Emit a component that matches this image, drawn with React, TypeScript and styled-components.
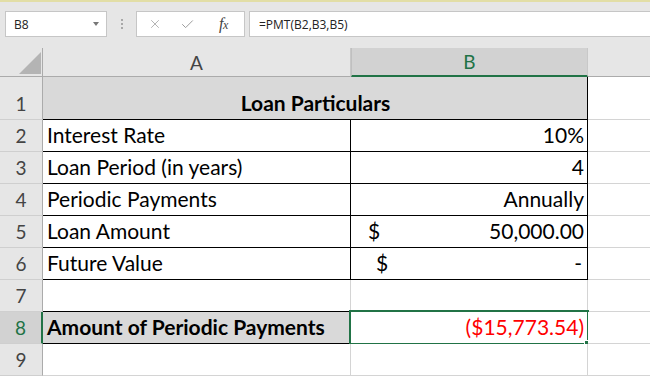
import React from "react";
import styled, { createGlobalStyle, css } from "styled-components";
import { X, Check } from "lucide-react";

const GREEN = "#217346";
const GRID = "#d4d4d4";
const INK = "#000";

const GlobalStyle = createGlobalStyle`
  body {
    margin: 0;
    background: #e6e6e6;
    font-family: Lato, "Open Sans", sans-serif;
  }
`;

const Window = styled.div`
  width: 650px;
  height: 376px;
  overflow: hidden;
  background: #e6e6e6;
  border-top: 2px solid #e2dea6;
  box-sizing: border-box;
`;

/* formula bar */
const FormulaBar = styled.div`
  display: flex;
  align-items: center;
  height: 26px;
  margin-top: 9px;
  padding-left: 5px;
  font-family: "Open Sans", sans-serif;
  font-size: 12px;
  color: #222;
`;
const NameBox = styled.div`
  display: flex;
  align-items: center;
  justify-content: space-between;
  box-sizing: border-box;
  width: 102px;
  height: 26px;
  padding: 0 7px 0 8px;
  background: #fff;
  border: 1px solid #c6c6c6;
`;
const DropArrow = styled.span`
  width: 0;
  height: 0;
  border-left: 3.5px solid transparent;
  border-right: 3.5px solid transparent;
  border-top: 4px solid #777;
`;
const Grip = styled.div`
  display: flex;
  flex-direction: column;
  gap: 2px;
  margin: 0 13px 0 14px;
  & > span {
    width: 2px;
    height: 2px;
    background: #a8a8a8;
  }
`;
const FuncBox = styled.div`
  display: flex;
  align-items: center;
  box-sizing: border-box;
  width: 109px;
  height: 26px;
  padding-left: 11px;
  gap: 18px;
  background: #fff;
  border: 1px solid #c6c6c6;
  color: #9c9c9c;
`;
const Fx = styled.span`
  font-family: "Liberation Serif", serif;
  font-style: italic;
  font-size: 16px;
  color: #444;
  margin-left: 6px;
  letter-spacing: -0.5px;
  & > small {
    font-size: 12px;
  }
`;
const FormulaInput = styled.div`
  flex: 1;
  display: flex;
  align-items: center;
  box-sizing: border-box;
  height: 26px;
  margin-left: 4px;
  padding-left: 9px;
  background: #fff;
  border: 1px solid #c6c6c6;
  border-right: none;
`;

/* sheet */
const Sheet = styled.div`
  display: grid;
  grid-template-columns: 43px 308px 237px 120px;
  grid-template-rows: 29px 43px repeat(9, 32px);
  margin-top: 11px;
`;

const HeadCell = styled.div<{ $active?: boolean }>`
  display: flex;
  align-items: center;
  justify-content: center;
  box-sizing: border-box;
  border-right: 1px solid #c8c8c8;
  border-bottom: 1px solid #ababab;
  font-size: 19px;
  color: #444;
  ${(p) =>
    p.$active &&
    css`
      background: #d2d2d2;
      color: ${GREEN};
      border-bottom: 2px solid ${GREEN};
      border-left: 1px solid #c0c0c0;
    `}
`;
const Corner = styled(HeadCell)`
  align-items: flex-end;
  justify-content: flex-end;
  padding: 0 1px 2px 0;
  border-right: 1px solid #ababab;
`;
const CornerMark = styled.span`
  width: 0;
  height: 0;
  border-left: 22px solid transparent;
  border-bottom: 22px solid #b4b4b4;
`;

const RowHead = styled.div<{ $active?: boolean }>`
  display: flex;
  align-items: flex-end;
  justify-content: center;
  box-sizing: border-box;
  padding-bottom: 4px;
  border-right: 1px solid #ababab;
  border-bottom: 1px solid #cfcfcf;
  font-size: 19px;
  color: #444;
  ${(p) =>
    p.$active &&
    css`
      background: #d2d2d2;
      color: ${GREEN};
      border-right: 2px solid ${GREEN};
    `}
`;

const Cell = styled.div<{
  $right?: string;
  $bottom?: string;
  $align?: "left" | "right" | "center" | "split";
  $fill?: boolean;
  $bold?: boolean;
  $span?: number;
  $indent?: number;
  $tail?: number;
  $color?: string;
}>`
  position: relative;
  display: flex;
  align-items: flex-end;
  box-sizing: border-box;
  padding: 0 ${(p) => p.$tail ?? 3}px 4px ${(p) => p.$indent ?? 4}px;
  background: ${(p) => (p.$fill ? "#d9d9d9" : "#fff")};
  border-right: 1px solid ${(p) => p.$right ?? GRID};
  border-bottom: 1px solid ${(p) => p.$bottom ?? GRID};
  font-size: 21px;
  font-weight: ${(p) => (p.$bold ? 700 : 400)};
  color: ${(p) => p.$color ?? INK};
  white-space: nowrap;
  grid-column: span ${(p) => p.$span ?? 1};
  justify-content: ${(p) =>
    p.$align === "right"
      ? "flex-end"
      : p.$align === "center"
      ? "center"
      : p.$align === "split"
      ? "space-between"
      : "flex-start"};
`;

const Selection = styled.div`
  position: absolute;
  left: -2px;
  top: -2px;
  right: -2px;
  bottom: -2px;
  border: 2px solid ${GREEN};
  pointer-events: none;
  &::after {
    content: "";
    position: absolute;
    right: -5px;
    bottom: -5px;
    width: 6px;
    height: 6px;
    background: ${GREEN};
    border: 1px solid #fff;
  }
`;

type Row = {
  label: string;
  value: string;
  money?: number;
};

const rows: Row[] = [
  { label: "Interest Rate", value: "10%" },
  { label: "Loan Period (in years)", value: "4" },
  { label: "Periodic Payments", value: "Annually" },
  { label: "Loan Amount", value: "50,000.00", money: 17 },
  { label: "Future Value", value: "-", money: 25 }
];

const App = () => {
  return (
    <Window>
      <GlobalStyle />
      <FormulaBar>
        <NameBox>
          <span>B8</span>
          <DropArrow />
        </NameBox>
        <Grip>
          <span />
          <span />
          <span />
        </Grip>
        <FuncBox>
          <X size={14} strokeWidth={1.3} />
          <Check size={15} strokeWidth={1.6} />
          <Fx>
            f<small>x</small>
          </Fx>
        </FuncBox>
        <FormulaInput>=PMT(B2,B3,B5)</FormulaInput>
      </FormulaBar>

      <Sheet>
        <Corner>
          <CornerMark />
        </Corner>
        <HeadCell>A</HeadCell>
        <HeadCell $active>B</HeadCell>
        <HeadCell />

        <RowHead>1</RowHead>
        <Cell $span={2} $fill $bold $align="center" $right={INK} $bottom={INK}>
          Loan Particulars
        </Cell>
        <Cell />

        {rows.map((r, i) => (
          <React.Fragment key={r.label}>
            <RowHead>{i + 2}</RowHead>
            <Cell $right={INK} $bottom={INK}>
              {r.label}
            </Cell>
            {r.money ? (
              <Cell
                $align="split"
                $indent={r.money}
                $tail={r.value === "-" ? 5 : 3}
                $right={INK}
                $bottom={INK}
              >
                <span>$</span>
                <span>{r.value}</span>
              </Cell>
            ) : (
              <Cell $align="right" $right={INK} $bottom={INK}>
                {r.value}
              </Cell>
            )}
            <Cell />
          </React.Fragment>
        ))}

        <RowHead>7</RowHead>
        <Cell $bottom={INK} />
        <Cell $bottom={INK} />
        <Cell />

        <RowHead $active>8</RowHead>
        <Cell $fill $bold $right={INK} $bottom={INK}>
          Amount of Periodic Payments
        </Cell>
        <Cell $align="right" $color="#ff0000" $right={INK} $bottom={INK}>
          ($15,773.54)
          <Selection />
        </Cell>
        <Cell />

        <RowHead>9</RowHead>
        <Cell />
        <Cell />
        <Cell />

        <RowHead />
        <Cell />
        <Cell />
        <Cell />
      </Sheet>
    </Window>
  );
};

export default App;
